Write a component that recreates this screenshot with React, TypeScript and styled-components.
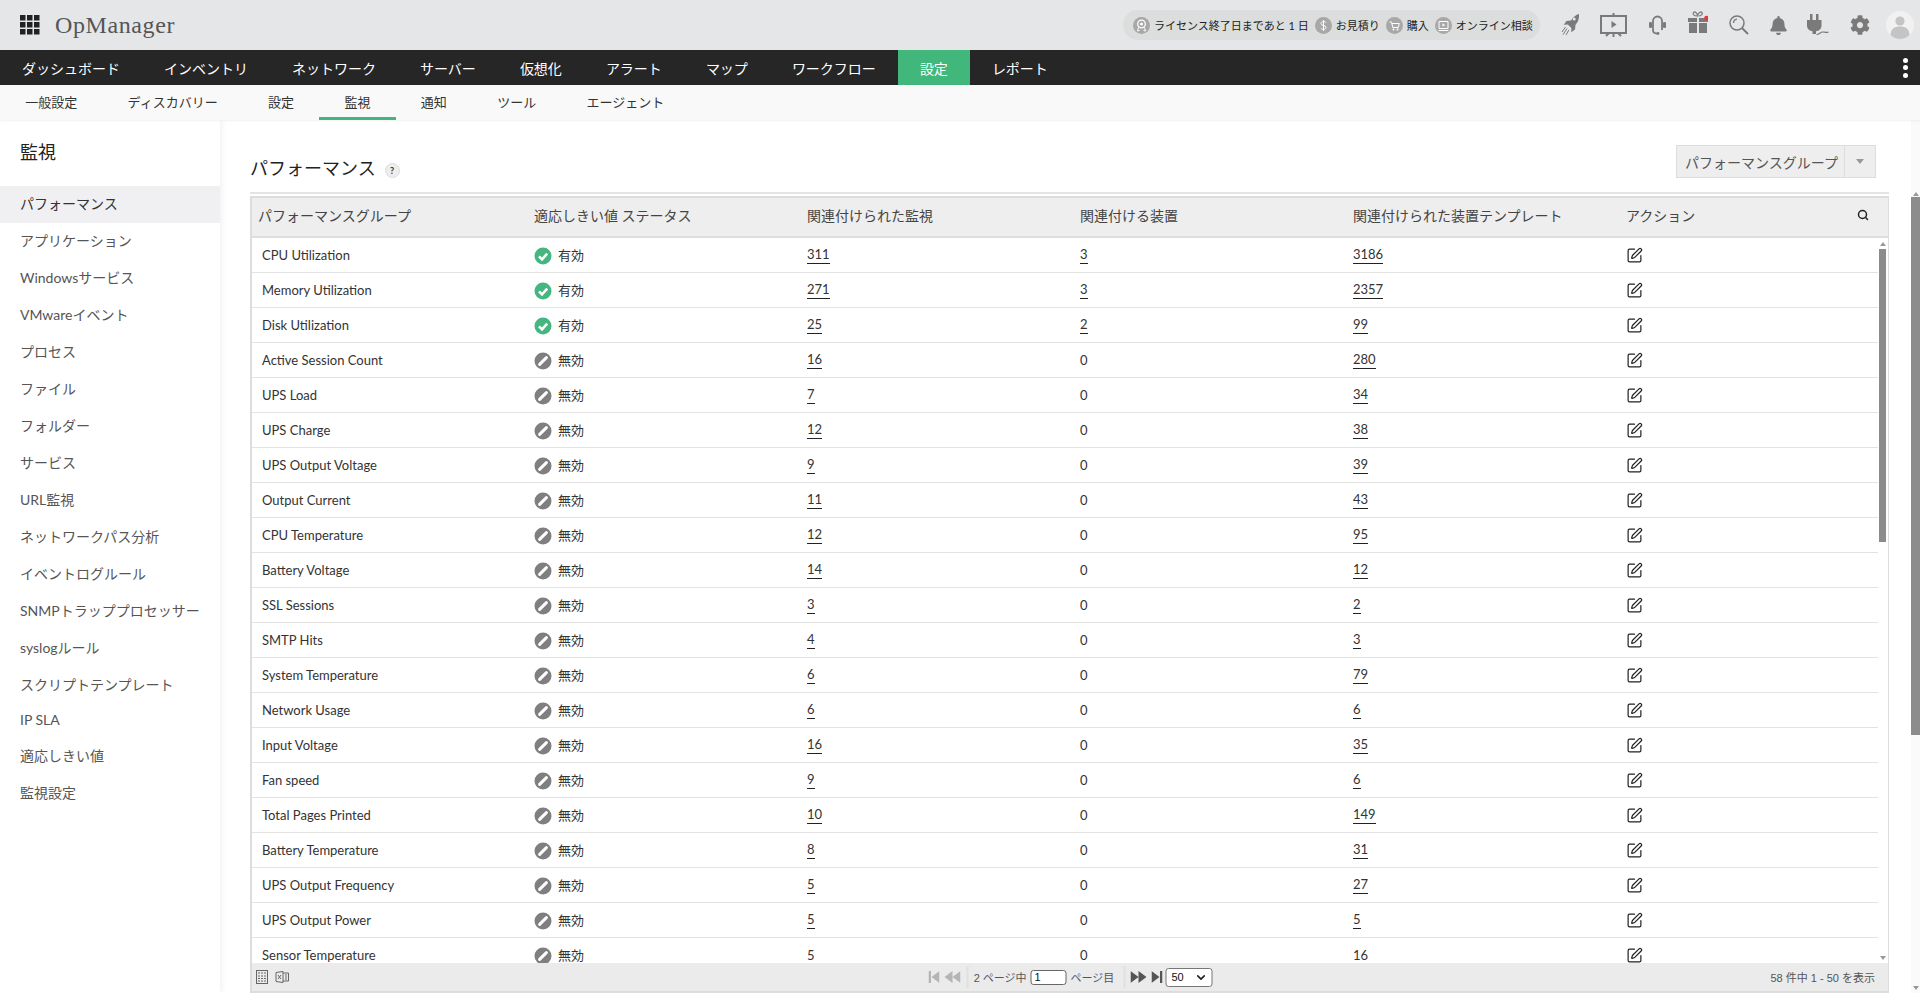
import React from "react";
import styled, { createGlobalStyle } from "styled-components";
import { FaBell, FaCog } from "react-icons/fa";
import { SquarePen, Search as SearchGlyph, ChevronDown } from "lucide-react";

const FONT = `Lato, "Noto Sans CJK JP", sans-serif`;

const Global = createGlobalStyle`
  html, body { margin: 0; padding: 0; height: 100%; overflow: hidden; background: #fff; }
  body { font-family: ${FONT}; }
  * { box-sizing: border-box; }
`;

const Page = styled.div`
  width: 1920px; height: 993px; display: flex; flex-direction: column; overflow: hidden; color: #333;
`;
const Header = styled.header`
  height: 50px; flex: none; display: flex; align-items: center; background: #e5e6e8; padding-left: 20px;
`;
const AppGrid = styled.svg` width: 20px; height: 20px; flex: none; `;
const Brand = styled.div`
  margin-left: 15px; font: 24px "Liberation Serif", serif; color: #555; letter-spacing: 0.6px; flex: 1;
`;
const Pill = styled.div`
  width: 417px; height: 30px; border-radius: 15px; background: #dcdddd; display: flex; align-items: center;
  padding-left: 10px; font-size: 11px; color: #222; white-space: nowrap;
`;
const PillIcon = styled.svg` width: 17px; height: 17px; flex: none; margin-right: 4px; `;
const PillText = styled.span` margin-right: 6px; `;
const Tools = styled.div`
  display: grid; grid-template-columns: 18px 27px 19px 20px 20px 16px 22px 20px 23px; column-gap: 21px;
  align-items: center; margin-left: 21px; color: #7a7a7a; margin-right: 6px;
  svg { display: block; }
`;
const Avatar = styled.svg` margin-left: -5px; `;
const Nav = styled.nav`
  height: 35px; flex: none; background: #262626; display: flex; align-items: stretch; justify-content: flex-start; position: relative;
`;
const NavItem = styled.div<{ $active?: boolean }>`
  padding: 0 22px; display: flex; align-items: center; font-size: 14px; color: #fff;
  background: ${p => (p.$active ? "#42b77c" : "transparent")};
`;
const Kebab = styled.div`
  margin-left: auto; margin-right: 12px; display: flex; flex-direction: column; justify-content: center; gap: 2.5px;
  span { width: 5px; height: 5px; border-radius: 50%; background: #fff; }
`;
const SubNav = styled.div`
  height: 35px; flex: none; background: #f9f9f9; display: flex; position: relative; z-index: 2;
  box-shadow: 0 1px 2px rgba(0,0,0,.06);
`;
const SubItem = styled.div<{ $active?: boolean }>`
  padding: 0 25.2px; display: flex; align-items: center; font-size: 13px; color: #333;
  border-bottom: 3px solid ${p => (p.$active ? "#42b77c" : "transparent")};
`;
const Body = styled.div` flex: 1; min-height: 0; display: flex; `;
const Sidebar = styled.aside`
  width: 220px; flex: none; background: #fff; box-shadow: 2px 0 6px rgba(0,0,0,.06); position: relative; z-index: 1;
`;
const SideTitle = styled.div`
  height: 66px; padding: 19px 0 0 20px; font-size: 18px; line-height: 26px; color: #222;
`;
const SideItem = styled.div<{ $active?: boolean }>`
  padding: 6.5px 0 10.5px 20px; font-size: 14px; color: #555; background: ${p => (p.$active ? "#f0f0f2" : "transparent")};
  ${p => p.$active && "color:#333;"}
`;
const Main = styled.main`
  flex: 1; min-width: 0; display: flex; flex-direction: column; padding: 0 22px 0 30px;
`;
const TitleRow = styled.div`
  height: 74px; flex: none; display: flex; align-items: flex-start; border-bottom: 2px solid #e4e4e4;
`;
const Title = styled.h1`
  margin: 34px 0 0; font-size: 18px; line-height: 28px; font-weight: 400; color: #222;
`;
const Help = styled.span`
  width: 15px; height: 15px; margin: 43px 0 0 9px; border-radius: 50%; background: #eee; border: 1px solid #ddd;
  font-size: 9px; font-weight: 700; line-height: 13px; text-align: center; color: #333;
`;
const GroupButton = styled.div`
  margin: 25px 13px 0 auto; width: 200px; height: 33px; display: flex; background: #eee; border: 1px solid #ddd;
  font-size: 14px; color: #555;
`;
const GroupLabel = styled.div`
  flex: 1; display: flex; align-items: center; padding-left: 8px; border-right: 1px solid #ddd;
`;
const GroupCaret = styled.div`
  width: 30px; display: flex; align-items: center; justify-content: center;
  &::after { content: ""; border: 4px solid transparent; border-top: 5px solid #999; border-bottom: 0; }
`;
const Table = styled.section`
  margin-top: 2px; flex: 1; min-height: 0; display: flex; flex-direction: column;
  border: 2px solid #ddd; border-right-width: 1px;
`;
const Columns = `grid-template-columns: 272px 273px 273px 273px 273px 1fr;`;
const HeadRow = styled.div`
  height: 40px; flex: none; display: grid; align-items: center; padding: 0 0 4px 6px; grid-template-columns: 276px 273px 273px 273px 273px 1fr 31px;
  background: #eee; border-bottom: 2px solid #ddd; font-size: 14px; color: #444;
`;
const HeadSearch = styled.div` display: flex; color: #222; `;
const TableBody = styled.div` flex: 1; min-height: 0; display: flex; overflow: hidden; `;
const Rows = styled.div` flex: 1; min-width: 0; overflow: hidden; `;
const Row = styled.div`
  height: 35px; display: grid; ${Columns} align-items: center; padding-left: 10px; border-bottom: 1px solid #e2e2e2;
  font-size: 13px; color: #333;
`;
const Status = styled.div`
  display: flex; align-items: center; gap: 6px;
  svg { margin-top: 2px; }
`;
const StatusLabel = styled.span` margin-bottom: 2px; `;
const Num = styled.a` color: #333; border-bottom: 1px solid #222; padding-bottom: 1px; justify-self: start; line-height: 16px; `;
const Plain = styled.span` justify-self: start; `;
const InnerBar = styled.div` width: 10px; flex: none; display: flex; flex-direction: column; align-items: center; padding-right: 1px; `;
const Arrow = styled.div<{ $down?: boolean }>`
  flex: none; width: 0; height: 0; border: 3px solid transparent;
  ${p => (p.$down ? "border-top: 4px solid #999; border-bottom: 0; margin-top:auto; margin-bottom:3px;" : "border-bottom: 4px solid #999; border-top: 0; margin-top:4px;")}
`;
const Thumb = styled.div<{ $w: number; $h: number; $mt: number }>`
  width: ${p => p.$w}px; height: ${p => p.$h}px; margin-top: ${p => p.$mt}px; background: #8c8c8c; flex: none;
`;
const OuterBar = styled.div`
  width: 9px; flex: none; display: flex; flex-direction: column; align-items: center; padding-top: 68px; background: #fafafa;
`;
const Footer = styled.div`
  height: 28px; flex: none; background: #ebebeb; display: grid; grid-template-columns: 1fr auto 1fr; align-items: center;
  font-size: 11px; color: #555; font-family: "Liberation Sans", "Noto Sans CJK JP", sans-serif;
`;
const FootLeft = styled.div` display: flex; gap: 7px; padding-left: 4px; color: #666; align-items: center; `;
const Pager = styled.div` display: flex; align-items: center; transform: translateX(0.5px); `;
const PagerIcon = styled.svg<{ $gap?: number }>` flex: none; margin-right: ${p => p.$gap ?? 5}px; `;
const Sep = styled.span<{ $before?: number }>` width: 2px; height: 22px; background: #e0e0e0; margin: 0 5px 0 ${p => p.$before ?? 6}px; flex: none; `;
const PageInput = styled.div`
  width: 36px; height: 15px; border: 1px solid #666; border-radius: 3px; background: #fff; margin: 0 4px; font-size: 11px; line-height: 13px;
  padding-left: 3px; color: #111;
`;
const PerPage = styled.div`
  width: 47px; height: 19px; border: 1px solid #777; border-radius: 3px; background: #fff; margin-left: 2px; display: flex;
  align-items: center; justify-content: space-between; padding: 0 4px 0 5px; font-size: 11px; color: #111;
`;
const FootRight = styled.div` text-align: right; padding-right: 13px; `;

const TOP = ["ダッシュボード","インベントリ","ネットワーク","サーバー","仮想化","アラート","マップ","ワークフロー","設定","レポート"];
const SUB = ["一般設定","ディスカバリー","設定","監視","通知","ツール","エージェント"];
const SIDE = ["パフォーマンス","アプリケーション","Windowsサービス","VMwareイベント","プロセス","ファイル","フォルダー","サービス","URL監視","ネットワークパス分析","イベントログルール","SNMPトラッププロセッサー","syslogルール","スクリプトテンプレート","IP SLA","適応しきい値","監視設定"];
const HEAD = ["パフォーマンスグループ","適応しきい値 ステータス","関連付けられた監視","関連付ける装置","関連付けられた装置テンプレート","アクション"];
const ROWS: [string, boolean, number, number, number][] = [
  ["CPU Utilization",true,311,3,3186],["Memory Utilization",true,271,3,2357],["Disk Utilization",true,25,2,99],
  ["Active Session Count",false,16,0,280],["UPS Load",false,7,0,34],["UPS Charge",false,12,0,38],["UPS Output Voltage",false,9,0,39],
  ["Output Current",false,11,0,43],["CPU Temperature",false,12,0,95],["Battery Voltage",false,14,0,12],["SSL Sessions",false,3,0,2],
  ["SMTP Hits",false,4,0,3],["System Temperature",false,6,0,79],["Network Usage",false,6,0,6],["Input Voltage",false,16,0,35],
  ["Fan speed",false,9,0,6],["Total Pages Printed",false,10,0,149],["Battery Temperature",false,8,0,31],["UPS Output Frequency",false,5,0,27],
  ["UPS Output Power",false,5,0,5],["Sensor Temperature",false,5,0,16],
];

const StatusOn = () => (
  <svg width="18" height="18" viewBox="0 0 18 18"><circle cx="9" cy="9" r="8.5" fill="#45b67f"/><path d="M5 9.3l3 3 5.2-5.6" fill="none" stroke="#fff" strokeWidth="2.6"/></svg>
);
const StatusOff = () => (
  <svg width="18" height="18" viewBox="0 0 18 18"><circle cx="9" cy="9" r="8.5" fill="#7f7f7f"/><path d="M5.6 12.4l6.8-6.8" fill="none" stroke="#fff" strokeWidth="3" strokeLinecap="round"/></svg>
);

const TopIcons = () => (
  <Tools>
    <svg width="18" height="22" viewBox="0 0 18 22" fill="currentColor">
      <path fillRule="evenodd" d="M18 0c.3 4.600-1 8.300-3.500 10.800l-.5 4.700-3.800 2.700.2-4.200-3.600-3.400-4 .2L5.400 7l4.600-.5C12.300 3 15 .8 18 0zM13.200 3.600a1.500 1.500 0 100 3 1.500 1.500 0 000-3z"/>
      <path d="M4.500 13L1 18M6 14.600l-4 6M7.800 16L5 21" stroke="currentColor" strokeWidth="1" fill="none"/>
    </svg>
    <svg width="27" height="24" viewBox="0 0 27 24" fill="none" stroke="currentColor">
      <path d="M13.500 0v3M1 3h25v17H1zM13.500 20v4M9 20l-3 3M18 20l3 3" strokeWidth="2"/>
      <path d="M11.500 8l5 3.500-5 3.500z" fill="currentColor" stroke="none"/>
    </svg>
    <svg width="19" height="20" viewBox="0 0 19 20" fill="none" stroke="currentColor" strokeWidth="1.800">
      <path d="M5 15V6a4.500 4.500 0 019 0v9"/>
      <rect x="1" y="7" width="3" height="6" rx="1.200" fill="currentColor" stroke="none"/>
      <rect x="15" y="7" width="3" height="6" rx="1.200" fill="currentColor" stroke="none"/>
      <path d="M5 15c0 2.500 2 3.500 4 3.500"/>
      <circle cx="10" cy="18.500" r="1.400" fill="currentColor" stroke="none"/>
    </svg>
    <svg width="20" height="24" viewBox="0 0 20 24" style={{ marginTop: -5 }}>
      <path d="M9 5C6 5 4.500 3 5.500 1.500 7 0 9 2 9.500 4.500 10.500 2 12.500 0 14 1.500 15 3 13 5 10.500 5" fill="none" stroke="currentColor" strokeWidth="1.200"/>
      <path d="M0 7h9v4H0zM11 7h9v4h-9zM1 12h8v10H1zM11 12h8v10h-8z" fill="currentColor"/>
      <circle cx="18.500" cy="7" r="2.300" fill="#f0323c"/>
    </svg>
    <svg width="20" height="20" viewBox="0 0 20 20" fill="none" stroke="currentColor">
      <circle cx="8" cy="8" r="7" strokeWidth="1.500"/>
      <path d="M4.500 8a4 4 0 013.500-3.800" strokeWidth="1.300"/>
      <path d="M13 13l6 6" strokeWidth="2"/>
    </svg>
    <FaBell size={19} style={{ marginLeft: -1 }} />
    <svg width="22" height="22" viewBox="0 0 22 22" fill="currentColor">
      <path d="M3 0h2.500v6H3zM9 0h2.500v6H9zM0 6h14.500v5.500c0 3.500-2.500 5.500-5.500 5.800V20H5.500v-2.700C2.500 17 0 15 0 11.500z"/>
      <path d="M9.500 20.500c3 0 3.500-2.500 6-2.500 2 0 3 .8 6 .2" fill="none" stroke="currentColor" strokeWidth="1.200"/>
    </svg>
    <FaCog size={20} />
    <Avatar width="28" height="28" viewBox="0 0 28 28">
      <circle cx="14" cy="14" r="14" fill="#f1f1f1"/>
      <circle cx="14" cy="10" r="4.600" fill="#c4c4c4"/>
      <path d="M4.500 24c0-6 4-8.500 9.500-8.500s9.500 2.500 9.500 8.500c-2.500 2.500-6 4-9.500 4s-7-1.500-9.500-4z" fill="#c4c4c4"/>
    </Avatar>
  </Tools>
);

export default function App() {
  return (
    <Page>
      <Global />
      <Header>
        <AppGrid viewBox="0 0 20 20" fill="#222">
          {[0, 7, 14].flatMap(y => [0, 7, 14].map(x => <rect key={`${x}-${y}`} x={x} y={y} width="5.500" height="5.500" />))}
        </AppGrid>
        <Brand>OpManager</Brand>
        <Pill>
          <PillIcon viewBox="0 0 17 17">
            <circle cx="8.500" cy="8.500" r="8.500" fill="#a8a8a8"/><circle cx="8.500" cy="7" r="3.800" fill="none" stroke="#fff" strokeWidth="1.300"/><circle cx="8.500" cy="7" r="1.500" fill="#fff"/><path d="M5.500 10.500L4.500 14l2-.5M11.500 10.500l1 3.500-2-.5" fill="none" stroke="#fff"/>
          </PillIcon>
          <PillText>ライセンス終了日まであと 1 日</PillText>
          <PillIcon viewBox="0 0 17 17">
            <circle cx="8.500" cy="8.500" r="8.500" fill="#a8a8a8"/><path d="M11 5.500C10.500 4.500 6 4 6 6.500s5 1.500 5 4-4.500 2-5 1M8.500 3v11" fill="none" stroke="#fff"/>
          </PillIcon>
          <PillText>お見積り</PillText>
          <PillIcon viewBox="0 0 17 17">
            <circle cx="8.500" cy="8.500" r="8.500" fill="#a8a8a8"/><path d="M3.500 5h2l1.300 5.500h5.500l1-4H6" fill="none" stroke="#fff"/><circle cx="7.500" cy="12.500" r="1" fill="#fff"/><circle cx="11.500" cy="12.500" r="1" fill="#fff"/>
          </PillIcon>
          <PillText>購入</PillText>
          <PillIcon viewBox="0 0 17 17">
            <circle cx="8.500" cy="8.500" r="8.500" fill="#a8a8a8"/><path d="M4 4.500h9v7H4zM3.500 13.500h10" fill="none" stroke="#fff"/><path d="M7.500 6.200l2.500 1.800-2.500 1.800z" fill="#fff"/>
          </PillIcon>
          <PillText>オンライン相談</PillText>
        </Pill>
        <TopIcons />
      </Header>
      <Nav>
        {TOP.map(t => <NavItem key={t} $active={t === "設定"}>{t}</NavItem>)}
        <Kebab><span /><span /><span /></Kebab>
      </Nav>
      <SubNav>
        {SUB.map(t => <SubItem key={t} $active={t === "監視"}>{t}</SubItem>)}
      </SubNav>
      <Body>
        <Sidebar>
          <SideTitle>監視</SideTitle>
          {SIDE.map((t, i) => <SideItem key={t} $active={i === 0}>{t}</SideItem>)}
        </Sidebar>
        <Main>
          <TitleRow>
            <Title>パフォーマンス</Title>
            <Help>?</Help>
            <GroupButton>
              <GroupLabel>パフォーマンスグループ</GroupLabel>
              <GroupCaret />
            </GroupButton>
          </TitleRow>
          <Table>
            <HeadRow>
              {HEAD.map(h => <div key={h}>{h}</div>)}
              <HeadSearch><SearchGlyph size={12} strokeWidth={3} /></HeadSearch>
            </HeadRow>
            <TableBody>
              <Rows>
                {ROWS.map(([name, on, a, b, c]) => (
                  <Row key={name}>
                    <span>{name}</span>
                    <Status>{on ? <StatusOn /> : <StatusOff />}<StatusLabel>{on ? "有効" : "無効"}</StatusLabel></Status>
                    {name === "Sensor Temperature" ? <Plain>{a}</Plain> : <Num>{a}</Num>}
                    {b > 0 ? <Num>{b}</Num> : <Plain>{b}</Plain>}
                    {name === "Sensor Temperature" ? <Plain>{c}</Plain> : <Num>{c}</Num>}
                    <SquarePen size={17} strokeWidth={1.7} color="#222" />
                  </Row>
                ))}
              </Rows>
              <InnerBar>
                <Arrow />
                <Thumb $w={7} $h={293} $mt={3} />
                <Arrow $down />
              </InnerBar>
            </TableBody>
            <Footer>
              <FootLeft>
                <svg width="12" height="14" viewBox="0 0 12 14" fill="none" stroke="currentColor"><rect x=".5" y=".5" width="11" height="13"/><path d="M2 3h8M2 6h8M2 8.500h8M2 11h8" strokeDasharray="2 1" strokeWidth="1.200"/></svg>
                <svg width="14" height="14" viewBox="0 0 14 14" fill="none" stroke="currentColor"><path d="M8 1.500l-7 1v9l7 1zM8 3h5.500v8H8M3 5l3 4M6 5L3 9M10 5h2M10 7h2M10 9h2"/></svg>
              </FootLeft>
              <Pager>
                <PagerIcon width="11" height="12" viewBox="0 0 11 12" fill="#b5b5b5"><path d="M0 0h2.500v12H0zM11 0v12L3 6z"/></PagerIcon>
                <PagerIcon width="16" height="12" viewBox="0 0 16 12" fill="#b5b5b5" $gap={0}><path d="M8 0v12L0 6zM16 0v12L8 6z"/></PagerIcon>
                <Sep />
                2 ページ中
                <PageInput>1</PageInput>
                ページ目
                <Sep $before={9} />
                <PagerIcon width="16" height="12" viewBox="0 0 16 12" fill="#555"><path d="M0 0v12l8-6zM8 0v12l8-6z"/></PagerIcon>
                <PagerIcon width="11" height="12" viewBox="0 0 11 12" fill="#555" $gap={1}><path d="M0 0v12l8-6zM8.500 0H11v12H8.500z"/></PagerIcon>
                <PerPage>50<ChevronDown size={13} strokeWidth={3} color="#222" /></PerPage>
              </Pager>
              <FootRight>58 件中 1 - 50 を表示</FootRight>
            </Footer>
          </Table>
        </Main>
        <OuterBar>
          <Arrow />
          <Thumb $w={9} $h={538} $mt={1} />
          <Arrow $down />
        </OuterBar>
      </Body>
    </Page>
  );
}
